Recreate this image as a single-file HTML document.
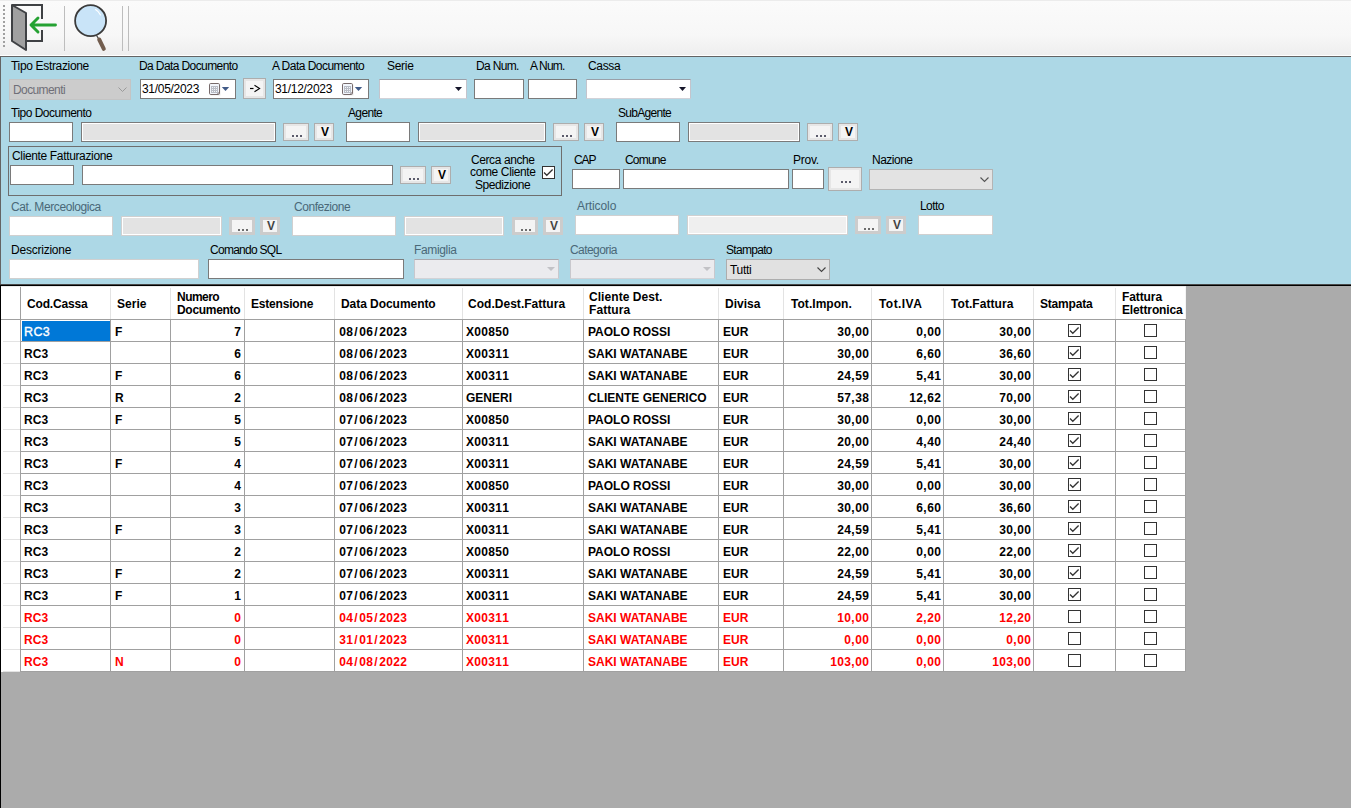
<!DOCTYPE html>
<html><head><meta charset="utf-8"><style>
*{box-sizing:border-box;margin:0;padding:0}
html,body{width:1351px;height:808px;overflow:hidden;background:#ababab;font-family:"Liberation Sans",sans-serif;position:relative}
.a{position:absolute}
.l{position:absolute;font-size:12px;color:#000;white-space:nowrap;line-height:14px}
.ld{color:#4a6878}
.tb{position:absolute;background:#fff;border:1px solid #7a7a7a}
.tbd{position:absolute;background:#fff;border:1px solid #d0d0d0}
.ro{position:absolute;background:#e3e3e3;border:1px solid #7a7a7a;box-shadow:inset 0 0 0 1px #fff}
.rod{position:absolute;background:#e3e3e3;border:1px solid #d0d0d0;box-shadow:inset 0 0 0 1px #fff}
.bt{position:absolute;background:#f4f4f4;border:1px solid #adadad;box-shadow:inset 0 0 0 2px #e6e6e6}
.btd{position:absolute;background:#f4f4f4;border:3px solid #cccccc}
.dt{position:absolute;width:2px;height:2px;background:#111;opacity:.7}
.vt{position:absolute;font-size:12px;font-weight:bold;line-height:12px;color:#000}
.cb{position:absolute;background:#fff;border:1px solid #7a7a7a}
.g{position:absolute;background:#a0a0a0}
.c{position:absolute;font-size:12px;font-weight:bold;line-height:14px;white-space:nowrap;color:#000}
.h{position:absolute;font-size:12px;font-weight:bold;line-height:14px;white-space:nowrap;color:#000}
.red{color:#ff0000}
.c i{font-style:normal;display:inline-block;text-align:center}
.c .d{width:7px}.c .s{width:6px}.c .m{width:4px}
</style></head><body>
<div class="a" style="left:0;top:0;width:1351px;height:55px;background:linear-gradient(#fbfbfb 0%,#f7f7f7 65%,#eeeeee 100%)"></div>
<div class="a" style="left:0;top:55px;width:1351px;height:1px;background:#fff"></div>
<div class="a" style="left:0;top:0;width:1351px;height:1px;background:#ececec"></div>
<div class="a" style="left:0;top:56px;width:1351px;height:1px;background:#646464"></div>
<div class="a" style="left:3px;top:5px;width:2px;height:2px;background:#a0a0a0"></div>
<div class="a" style="left:3px;top:9px;width:2px;height:2px;background:#a0a0a0"></div>
<div class="a" style="left:3px;top:13px;width:2px;height:2px;background:#a0a0a0"></div>
<div class="a" style="left:3px;top:17px;width:2px;height:2px;background:#a0a0a0"></div>
<div class="a" style="left:3px;top:21px;width:2px;height:2px;background:#a0a0a0"></div>
<div class="a" style="left:3px;top:25px;width:2px;height:2px;background:#a0a0a0"></div>
<div class="a" style="left:3px;top:29px;width:2px;height:2px;background:#a0a0a0"></div>
<div class="a" style="left:3px;top:33px;width:2px;height:2px;background:#a0a0a0"></div>
<div class="a" style="left:3px;top:37px;width:2px;height:2px;background:#a0a0a0"></div>
<div class="a" style="left:3px;top:41px;width:2px;height:2px;background:#a0a0a0"></div>
<div class="a" style="left:3px;top:45px;width:2px;height:2px;background:#a0a0a0"></div>
<div class="a" style="left:64px;top:6px;width:1px;height:45px;background:#bdbdbd"></div>
<div class="a" style="left:122px;top:6px;width:1px;height:45px;background:#bdbdbd"></div>
<div class="a" style="left:128px;top:6px;width:1px;height:45px;background:#bdbdbd"></div>
<svg class="a" style="left:0;top:0" width="140" height="56" viewBox="0 0 140 56">
<path d="M12 5 H42 V19 M42 30 V41 H26" fill="none" stroke="#3f4144" stroke-width="2"/>
<path d="M12 5 L26 13 V50 L12 41 Z" fill="#a0a0a0" stroke="#3f4144" stroke-width="2" stroke-linejoin="round"/>
<path d="M55.5 25 H31 M38 18 L31 25 L38 32" fill="none" stroke="#25a233" stroke-width="2.9" stroke-linecap="round" stroke-linejoin="round"/>
<circle cx="90.6" cy="20.7" r="15.5" fill="#c9e4f8" stroke="#3b3b3b" stroke-width="1.8"/>
<path d="M95.5 9.5 Q99 11.5 100.5 15" fill="none" stroke="#fff" stroke-width="1.1" stroke-linecap="round"/>
<path d="M96.5 35.5 L98.5 38.5" stroke="#3b3b3b" stroke-width="1.2"/><path d="M99.2 39.5 L103.8 48.8" fill="none" stroke="#725d4e" stroke-width="4" stroke-linecap="round"/>
</svg>
<div class="a" style="left:0;top:57px;width:1351px;height:227px;background:#add8e6"></div>
<div class="a" style="left:0;top:57px;width:1px;height:227px;background:#646464"></div>
<div class="l" style="left:11px;top:59px;letter-spacing:-0.331px;">Tipo Estrazione</div>
<div class="l" style="left:139px;top:59px;letter-spacing:-0.601px;">Da Data Documento</div>
<div class="l" style="left:272px;top:59px;letter-spacing:-0.532px;">A Data Documento</div>
<div class="l" style="left:387px;top:59px;letter-spacing:-0.303px;">Serie</div>
<div class="l" style="left:476px;top:59px;letter-spacing:-0.657px;">Da Num.</div>
<div class="l" style="left:530px;top:59px;letter-spacing:-0.802px;">A Num.</div>
<div class="l" style="left:588px;top:59px;letter-spacing:-0.328px;">Cassa</div>
<div class="a" style="left:9px;top:79px;width:122px;height:21px;background:#cccccc;border:1px solid #c4c4c4"></div>
<div class="l" style="left:13px;top:83px;color:#6f6f78;font-size:12px;letter-spacing:-0.6px">Documenti</div>
<svg class="a" style="left:118px;top:87px" width="9" height="6"><path d="M0.5 0.5 L4.5 4.5 L8.5 0.5" fill="none" stroke="#9a9a9a" stroke-width="1"/></svg>
<div class="tb" style="left:140px;top:79px;width:96px;height:20px;"></div>
<div class="l" style="left:142px;top:82px;font-size:12px;letter-spacing:-0.3px">31/05/2023</div>
<svg class="a" style="left:209px;top:83px" width="22" height="14" viewBox="0 0 22 14">
<rect x="1.5" y="1.5" width="10" height="11" fill="#000" opacity="0.08"/>
<rect x="0.5" y="0.5" width="10" height="11" rx="1.2" fill="#f2f6fc" stroke="#776a6a" stroke-width="1"/>
<rect x="2" y="3" width="7" height="7" fill="#b9bdc6"/>
<rect x="3" y="4" width="1" height="1" fill="#f4f6fa"/><rect x="3" y="6" width="1" height="1" fill="#f4f6fa"/><rect x="3" y="8" width="1" height="1" fill="#f4f6fa"/><rect x="5" y="4" width="1" height="1" fill="#f4f6fa"/><rect x="5" y="6" width="1" height="1" fill="#f4f6fa"/><rect x="5" y="8" width="1" height="1" fill="#f4f6fa"/><rect x="7" y="4" width="1" height="1" fill="#f4f6fa"/><rect x="7" y="6" width="1" height="1" fill="#f4f6fa"/><rect x="7" y="8" width="1" height="1" fill="#f4f6fa"/>
<path d="M8 11.5 L10.5 9" stroke="#776a6a" stroke-width="1"/>
<path d="M12.8 4 H20.2 L16.5 8 Z" fill="#415b88"/>
</svg>
<div class="bt" style="left:243px;top:78px;width:23px;height:21px;"></div>
<svg class="a" style="left:243px;top:78px" width="23" height="21"><path d="M7 10.5 H10.5" stroke="#000" stroke-width="1.2"/><path d="M11.5 7.3 L16.6 10.5 L11.5 13.7" fill="none" stroke="#000" stroke-width="1.1"/></svg>
<div class="tb" style="left:273px;top:79px;width:96px;height:20px;"></div>
<div class="l" style="left:275px;top:82px;font-size:12px;letter-spacing:-0.3px">31/12/2023</div>
<svg class="a" style="left:342px;top:83px" width="22" height="14" viewBox="0 0 22 14">
<rect x="1.5" y="1.5" width="10" height="11" fill="#000" opacity="0.08"/>
<rect x="0.5" y="0.5" width="10" height="11" rx="1.2" fill="#f2f6fc" stroke="#776a6a" stroke-width="1"/>
<rect x="2" y="3" width="7" height="7" fill="#b9bdc6"/>
<rect x="3" y="4" width="1" height="1" fill="#f4f6fa"/><rect x="3" y="6" width="1" height="1" fill="#f4f6fa"/><rect x="3" y="8" width="1" height="1" fill="#f4f6fa"/><rect x="5" y="4" width="1" height="1" fill="#f4f6fa"/><rect x="5" y="6" width="1" height="1" fill="#f4f6fa"/><rect x="5" y="8" width="1" height="1" fill="#f4f6fa"/><rect x="7" y="4" width="1" height="1" fill="#f4f6fa"/><rect x="7" y="6" width="1" height="1" fill="#f4f6fa"/><rect x="7" y="8" width="1" height="1" fill="#f4f6fa"/>
<path d="M8 11.5 L10.5 9" stroke="#776a6a" stroke-width="1"/>
<path d="M12.8 4 H20.2 L16.5 8 Z" fill="#415b88"/>
</svg>
<div class="tb" style="left:379px;top:79px;width:88px;height:20px;border-color:#9a9fa8 #c4c4cc #d2d2d8 #c4c4cc"></div>
<svg class="a" style="left:455px;top:87px" width="7" height="5"><path d="M0 0 H7 L3.5 4Z" fill="#15152a"/></svg>
<div class="tb" style="left:474px;top:79px;width:50px;height:20px;"></div>
<div class="tb" style="left:528px;top:79px;width:49px;height:20px;"></div>
<div class="tb" style="left:586px;top:79px;width:105px;height:20px;border-color:#9a9fa8 #c4c4cc #d2d2d8 #c4c4cc"></div>
<svg class="a" style="left:679px;top:87px" width="7" height="5"><path d="M0 0 H7 L3.5 4Z" fill="#15152a"/></svg>
<div class="l" style="left:11px;top:106px;letter-spacing:-0.508px;">Tipo Documento</div>
<div class="l" style="left:348px;top:106px;letter-spacing:-0.647px;">Agente</div>
<div class="l" style="left:618px;top:106px;letter-spacing:-0.711px;">SubAgente</div>
<div class="tb" style="left:9px;top:122px;width:64px;height:20px;"></div>
<div class="ro" style="left:81px;top:122px;width:195px;height:20px;"></div>
<div class="bt" style="left:283px;top:123px;width:26px;height:18px;"></div>
<div class="dt" style="left:292px;top:135px;background:#1a1a30"></div>
<div class="dt" style="left:296px;top:135px;background:#1a1a30"></div>
<div class="dt" style="left:300px;top:135px;background:#1a1a30"></div>
<div class="bt" style="left:314px;top:123px;width:20px;height:18px;"></div>
<div class="vt" style="left:315px;width:20px;text-align:center;top:126px;color:#000">V</div>
<div class="tb" style="left:346px;top:122px;width:64px;height:20px;"></div>
<div class="ro" style="left:418px;top:122px;width:128px;height:20px;"></div>
<div class="bt" style="left:553px;top:123px;width:26px;height:18px;"></div>
<div class="dt" style="left:562px;top:135px;background:#1a1a30"></div>
<div class="dt" style="left:566px;top:135px;background:#1a1a30"></div>
<div class="dt" style="left:570px;top:135px;background:#1a1a30"></div>
<div class="bt" style="left:584px;top:123px;width:20px;height:18px;"></div>
<div class="vt" style="left:585px;width:20px;text-align:center;top:126px;color:#000">V</div>
<div class="tb" style="left:616px;top:122px;width:64px;height:20px;"></div>
<div class="ro" style="left:688px;top:122px;width:112px;height:20px;"></div>
<div class="bt" style="left:807px;top:123px;width:26px;height:18px;"></div>
<div class="dt" style="left:816px;top:135px;background:#1a1a30"></div>
<div class="dt" style="left:820px;top:135px;background:#1a1a30"></div>
<div class="dt" style="left:824px;top:135px;background:#1a1a30"></div>
<div class="bt" style="left:838px;top:123px;width:20px;height:18px;"></div>
<div class="vt" style="left:839px;width:20px;text-align:center;top:126px;color:#000">V</div>
<div class="a" style="left:8px;top:146px;width:554px;height:50px;border:1px solid #6e6e6e"></div>
<div class="l" style="left:12px;top:149px;letter-spacing:-0.352px;">Cliente Fatturazione</div>
<div class="tb" style="left:10px;top:165px;width:64px;height:20px;"></div>
<div class="tb" style="left:82px;top:165px;width:311px;height:20px;"></div>
<div class="bt" style="left:400px;top:166px;width:26px;height:18px;"></div>
<div class="dt" style="left:409px;top:178px;background:#1a1a30"></div>
<div class="dt" style="left:413px;top:178px;background:#1a1a30"></div>
<div class="dt" style="left:417px;top:178px;background:#1a1a30"></div>
<div class="bt" style="left:431px;top:166px;width:20px;height:18px;"></div>
<div class="vt" style="left:432px;width:20px;text-align:center;top:169px;color:#000">V</div>
<div class="l" style="left:471px;top:152.5px;letter-spacing:-0.404px;">Cerca anche</div>
<div class="l" style="left:470px;top:165.2px;letter-spacing:-0.366px;">come Cliente</div>
<div class="l" style="left:475px;top:177.9px;letter-spacing:-0.420px;">Spedizione</div>
<div class="cb" style="left:542px;top:166px;width:13px;height:13px;border-color:#333"></div>
<svg class="a" style="left:542px;top:166px" width="13" height="13"><path d="M2 6.5 L4.8 9.3 L10.6 3.5" fill="none" stroke="#333" stroke-width="1.3"/></svg>
<div class="l" style="left:574px;top:153px;letter-spacing:-1.087px;">CAP</div>
<div class="l" style="left:625px;top:153px;letter-spacing:-0.811px;">Comune</div>
<div class="l" style="left:793px;top:153px;letter-spacing:-0.229px;">Prov.</div>
<div class="l" style="left:872px;top:153px;letter-spacing:-0.505px;">Nazione</div>
<div class="tb" style="left:572px;top:169px;width:48px;height:20px;"></div>
<div class="tb" style="left:623px;top:169px;width:166px;height:20px;"></div>
<div class="tb" style="left:792px;top:169px;width:32px;height:20px;"></div>
<div class="bt" style="left:828px;top:167px;width:34px;height:24px;"></div>
<div class="dt" style="left:841px;top:181px;background:#1a1a30"></div>
<div class="dt" style="left:845px;top:181px;background:#1a1a30"></div>
<div class="dt" style="left:849px;top:181px;background:#1a1a30"></div>
<div class="a" style="left:869px;top:169px;width:124px;height:21px;background:#e3e3e3;border:1px solid #b4b4b4"></div>
<svg class="a" style="left:980px;top:177px" width="9" height="6"><path d="M0.5 0.5 L4.5 4.5 L8.5 0.5" fill="none" stroke="#555" stroke-width="1.1"/></svg>
<div class="l ld" style="left:11px;top:200px;letter-spacing:-0.401px;">Cat. Merceologica</div>
<div class="l ld" style="left:294px;top:200px;letter-spacing:-0.457px;">Confezione</div>
<div class="l ld" style="left:577px;top:199px;letter-spacing:-0.102px;">Articolo</div>
<div class="l" style="left:920px;top:199px;letter-spacing:-0.597px;">Lotto</div>
<div class="tbd" style="left:9px;top:216px;width:104px;height:20px;"></div>
<div class="rod" style="left:121px;top:216px;width:101px;height:20px;"></div>
<div class="btd" style="left:229px;top:217px;width:26px;height:18px;"></div>
<div class="dt" style="left:238px;top:229px;background:#333"></div>
<div class="dt" style="left:242px;top:229px;background:#333"></div>
<div class="dt" style="left:246px;top:229px;background:#333"></div>
<div class="btd" style="left:260px;top:217px;width:20px;height:18px;"></div>
<div class="vt" style="left:261px;width:20px;text-align:center;top:220px;color:#444">V</div>
<div class="tbd" style="left:292px;top:216px;width:104px;height:20px;"></div>
<div class="rod" style="left:404px;top:216px;width:100px;height:20px;"></div>
<div class="btd" style="left:512px;top:217px;width:26px;height:18px;"></div>
<div class="dt" style="left:521px;top:229px;background:#333"></div>
<div class="dt" style="left:525px;top:229px;background:#333"></div>
<div class="dt" style="left:529px;top:229px;background:#333"></div>
<div class="btd" style="left:543px;top:217px;width:20px;height:18px;"></div>
<div class="vt" style="left:544px;width:20px;text-align:center;top:220px;color:#444">V</div>
<div class="tbd" style="left:575px;top:215px;width:104px;height:20px;"></div>
<div class="a" style="left:687px;top:215px;width:161px;height:20px;background:#efefef;border:1px solid #d0d0d0;box-shadow:inset 0 0 0 1px #fff"></div>
<div class="btd" style="left:855px;top:216px;width:26px;height:18px;"></div>
<div class="dt" style="left:864px;top:228px;background:#333"></div>
<div class="dt" style="left:868px;top:228px;background:#333"></div>
<div class="dt" style="left:872px;top:228px;background:#333"></div>
<div class="btd" style="left:886px;top:216px;width:20px;height:18px;"></div>
<div class="vt" style="left:887px;width:20px;text-align:center;top:219px;color:#444">V</div>
<div class="tbd" style="left:918px;top:215px;width:75px;height:20px;"></div>
<div class="l" style="left:11px;top:243px;letter-spacing:-0.229px;">Descrizione</div>
<div class="l" style="left:210px;top:243px;letter-spacing:-0.728px;">Comando SQL</div>
<div class="l ld" style="left:414px;top:243px;letter-spacing:-0.349px;">Famiglia</div>
<div class="l ld" style="left:570px;top:243px;letter-spacing:-0.566px;">Categoria</div>
<div class="l" style="left:726px;top:243px;letter-spacing:-0.695px;">Stampato</div>
<div class="tbd" style="left:9px;top:259px;width:190px;height:20px;"></div>
<div class="tb" style="left:208px;top:259px;width:196px;height:20px;"></div>
<div class="a" style="left:414px;top:259px;width:145px;height:20px;background:#ebebee;border:1px solid;border-color:#a8a8ae #c8c8cd #d2d2d6 #c8c8cd"></div>
<svg class="a" style="left:547px;top:267px" width="8" height="5"><path d="M0 0 H8 L4 4Z" fill="#c2c2c6"/></svg>
<div class="a" style="left:570px;top:259px;width:145px;height:20px;background:#ebebee;border:1px solid;border-color:#a8a8ae #c8c8cd #d2d2d6 #c8c8cd"></div>
<svg class="a" style="left:703px;top:267px" width="8" height="5"><path d="M0 0 H8 L4 4Z" fill="#c2c2c6"/></svg>
<div class="a" style="left:726px;top:259px;width:104px;height:21px;background:#e1e1e1;border:1px solid #adadad"></div>
<div class="l" style="left:730px;top:263px;font-size:12px;letter-spacing:-0.3px">Tutti</div>
<svg class="a" style="left:817px;top:267px" width="9" height="6"><path d="M0.5 0.5 L4.5 4.5 L8.5 0.5" fill="none" stroke="#444" stroke-width="1.1"/></svg>
<div class="a" style="left:0;top:284px;width:1351px;height:1px;background:#4a4a4a"></div>
<div class="a" style="left:0;top:285px;width:1351px;height:1px;background:#000"></div>
<div class="a" style="left:0;top:286px;width:1px;height:522px;background:#000"></div>
<div class="a" style="left:1px;top:286px;width:1184px;height:386px;background:#fff"></div>
<div class="g" style="left:110px;top:288px;width:1px;height:31px;background:#e3e3e3"></div>
<div class="g" style="left:170px;top:288px;width:1px;height:31px;background:#e3e3e3"></div>
<div class="g" style="left:244px;top:288px;width:1px;height:31px;background:#e3e3e3"></div>
<div class="g" style="left:334px;top:288px;width:1px;height:31px;background:#e3e3e3"></div>
<div class="g" style="left:462px;top:288px;width:1px;height:31px;background:#e3e3e3"></div>
<div class="g" style="left:583px;top:288px;width:1px;height:31px;background:#e3e3e3"></div>
<div class="g" style="left:718px;top:288px;width:1px;height:31px;background:#e3e3e3"></div>
<div class="g" style="left:783px;top:288px;width:1px;height:31px;background:#e3e3e3"></div>
<div class="g" style="left:871px;top:288px;width:1px;height:31px;background:#e3e3e3"></div>
<div class="g" style="left:943px;top:288px;width:1px;height:31px;background:#e3e3e3"></div>
<div class="g" style="left:1033px;top:288px;width:1px;height:31px;background:#e3e3e3"></div>
<div class="g" style="left:1115px;top:288px;width:1px;height:31px;background:#e3e3e3"></div>
<div class="g" style="left:20px;top:286px;width:1px;height:33px"></div>
<div class="a" style="left:1185px;top:286px;width:1px;height:33px;background:#f4f4f4"></div>
<div class="a" style="left:1px;top:286px;width:1185px;height:1px;background:#ececec"></div>
<div class="g" style="left:1px;top:319px;width:1184px;height:1px"></div>
<div class="g" style="left:21px;top:341px;width:1164px;height:1px"></div>
<div class="g" style="left:3px;top:341px;width:17px;height:1px;background:#e3e3e3"></div>
<div class="g" style="left:21px;top:363px;width:1164px;height:1px"></div>
<div class="g" style="left:3px;top:363px;width:17px;height:1px;background:#e3e3e3"></div>
<div class="g" style="left:21px;top:385px;width:1164px;height:1px"></div>
<div class="g" style="left:3px;top:385px;width:17px;height:1px;background:#e3e3e3"></div>
<div class="g" style="left:21px;top:407px;width:1164px;height:1px"></div>
<div class="g" style="left:3px;top:407px;width:17px;height:1px;background:#e3e3e3"></div>
<div class="g" style="left:21px;top:429px;width:1164px;height:1px"></div>
<div class="g" style="left:3px;top:429px;width:17px;height:1px;background:#e3e3e3"></div>
<div class="g" style="left:21px;top:451px;width:1164px;height:1px"></div>
<div class="g" style="left:3px;top:451px;width:17px;height:1px;background:#e3e3e3"></div>
<div class="g" style="left:21px;top:473px;width:1164px;height:1px"></div>
<div class="g" style="left:3px;top:473px;width:17px;height:1px;background:#e3e3e3"></div>
<div class="g" style="left:21px;top:495px;width:1164px;height:1px"></div>
<div class="g" style="left:3px;top:495px;width:17px;height:1px;background:#e3e3e3"></div>
<div class="g" style="left:21px;top:517px;width:1164px;height:1px"></div>
<div class="g" style="left:3px;top:517px;width:17px;height:1px;background:#e3e3e3"></div>
<div class="g" style="left:21px;top:539px;width:1164px;height:1px"></div>
<div class="g" style="left:3px;top:539px;width:17px;height:1px;background:#e3e3e3"></div>
<div class="g" style="left:21px;top:561px;width:1164px;height:1px"></div>
<div class="g" style="left:3px;top:561px;width:17px;height:1px;background:#e3e3e3"></div>
<div class="g" style="left:21px;top:583px;width:1164px;height:1px"></div>
<div class="g" style="left:3px;top:583px;width:17px;height:1px;background:#e3e3e3"></div>
<div class="g" style="left:21px;top:605px;width:1164px;height:1px"></div>
<div class="g" style="left:3px;top:605px;width:17px;height:1px;background:#e3e3e3"></div>
<div class="g" style="left:21px;top:627px;width:1164px;height:1px"></div>
<div class="g" style="left:3px;top:627px;width:17px;height:1px;background:#e3e3e3"></div>
<div class="g" style="left:21px;top:649px;width:1164px;height:1px"></div>
<div class="g" style="left:3px;top:649px;width:17px;height:1px;background:#e3e3e3"></div>
<div class="g" style="left:21px;top:671px;width:1164px;height:1px"></div>
<div class="g" style="left:3px;top:671px;width:17px;height:1px;background:#e3e3e3"></div>
<div class="g" style="left:20px;top:319px;width:1px;height:353px"></div>
<div class="g" style="left:110px;top:319px;width:1px;height:353px"></div>
<div class="g" style="left:170px;top:319px;width:1px;height:353px"></div>
<div class="g" style="left:244px;top:319px;width:1px;height:353px"></div>
<div class="g" style="left:334px;top:319px;width:1px;height:353px"></div>
<div class="g" style="left:462px;top:319px;width:1px;height:353px"></div>
<div class="g" style="left:583px;top:319px;width:1px;height:353px"></div>
<div class="g" style="left:718px;top:319px;width:1px;height:353px"></div>
<div class="g" style="left:783px;top:319px;width:1px;height:353px"></div>
<div class="g" style="left:871px;top:319px;width:1px;height:353px"></div>
<div class="g" style="left:943px;top:319px;width:1px;height:353px"></div>
<div class="g" style="left:1033px;top:319px;width:1px;height:353px"></div>
<div class="g" style="left:1115px;top:319px;width:1px;height:353px"></div>
<div class="g" style="left:1185px;top:319px;width:1px;height:353px"></div>
<div class="h" style="left:27px;top:297px;letter-spacing:-0.153px">Cod.Cassa</div>
<div class="h" style="left:117px;top:297px;letter-spacing:0.036px">Serie</div>
<div class="h" style="left:177px;top:290px;letter-spacing:-0.528px">Numero</div>
<div class="h" style="left:177px;top:303px;letter-spacing:-0.300px">Documento</div>
<div class="h" style="left:251px;top:297px;letter-spacing:-0.191px">Estensione</div>
<div class="h" style="left:341px;top:297px;letter-spacing:-0.050px">Data Documento</div>
<div class="h" style="left:468px;top:297px;letter-spacing:0.028px">Cod.Dest.Fattura</div>
<div class="h" style="left:589px;top:290px;letter-spacing:0.060px">Cliente Dest.</div>
<div class="h" style="left:589px;top:303px;letter-spacing:0.088px">Fattura</div>
<div class="h" style="left:725px;top:297px;letter-spacing:0.029px">Divisa</div>
<div class="h" style="left:791px;top:297px;letter-spacing:0.041px">Tot.Impon.</div>
<div class="h" style="left:879px;top:297px;letter-spacing:0.431px">Tot.IVA</div>
<div class="h" style="left:951px;top:297px;letter-spacing:0.053px">Tot.Fattura</div>
<div class="h" style="left:1040px;top:297px;letter-spacing:-0.203px">Stampata</div>
<div class="h" style="left:1122px;top:290px;letter-spacing:-0.095px">Fattura</div>
<div class="h" style="left:1122px;top:303px;letter-spacing:-0.132px">Elettronica</div>
<div class="a" style="left:22px;top:321px;width:88px;height:20px;background:#0078d7"></div>
<div class="c" style="left:24px;top:325px;color:#fff;font-weight:normal;font-size:12.5px;letter-spacing:0.4px;-webkit-text-stroke:0.35px #fff">RC3</div>
<div class="c" style="left:115px;top:325px;">F</div>
<div class="c" style="right:1110px;top:325px"><i class="d">7</i></div>
<div class="c" style="left:339px;top:325px;"><i class="d">0</i><i class="d">8</i><i class="s">/</i><i class="d">0</i><i class="d">6</i><i class="s">/</i><i class="d">2</i><i class="d">0</i><i class="d">2</i><i class="d">3</i></div>
<div class="c" style="left:466px;top:325px;">X<i class="d">0</i><i class="d">0</i><i class="d">8</i><i class="d">5</i><i class="d">0</i></div>
<div class="c" style="left:588px;top:325px;">PAOLO ROSSI</div>
<div class="c" style="left:723px;top:325px;">EUR</div>
<div class="c" style="right:482px;top:325px"><i class="d">3</i><i class="d">0</i><i class="m">,</i><i class="d">0</i><i class="d">0</i></div>
<div class="c" style="right:410px;top:325px"><i class="d">0</i><i class="m">,</i><i class="d">0</i><i class="d">0</i></div>
<div class="c" style="right:320px;top:325px"><i class="d">3</i><i class="d">0</i><i class="m">,</i><i class="d">0</i><i class="d">0</i></div>
<div class="cb" style="left:1068px;top:324px;width:13px;height:13px;border-color:#333"></div>
<svg class="a" style="left:1068px;top:324px" width="13" height="13"><path d="M2 6.5 L4.8 9.3 L10.6 3.5" fill="none" stroke="#333" stroke-width="1.3"/></svg>
<div class="cb" style="left:1144px;top:324px;width:13px;height:13px;border-color:#333"></div>
<div class="c" style="left:24px;top:347px;">RC<i class="d">3</i></div>
<div class="c" style="left:115px;top:347px;"></div>
<div class="c" style="right:1110px;top:347px"><i class="d">6</i></div>
<div class="c" style="left:339px;top:347px;"><i class="d">0</i><i class="d">8</i><i class="s">/</i><i class="d">0</i><i class="d">6</i><i class="s">/</i><i class="d">2</i><i class="d">0</i><i class="d">2</i><i class="d">3</i></div>
<div class="c" style="left:466px;top:347px;">X<i class="d">0</i><i class="d">0</i><i class="d">3</i><i class="d">1</i><i class="d">1</i></div>
<div class="c" style="left:588px;top:347px;">SAKI WATANABE</div>
<div class="c" style="left:723px;top:347px;">EUR</div>
<div class="c" style="right:482px;top:347px"><i class="d">3</i><i class="d">0</i><i class="m">,</i><i class="d">0</i><i class="d">0</i></div>
<div class="c" style="right:410px;top:347px"><i class="d">6</i><i class="m">,</i><i class="d">6</i><i class="d">0</i></div>
<div class="c" style="right:320px;top:347px"><i class="d">3</i><i class="d">6</i><i class="m">,</i><i class="d">6</i><i class="d">0</i></div>
<div class="cb" style="left:1068px;top:346px;width:13px;height:13px;border-color:#333"></div>
<svg class="a" style="left:1068px;top:346px" width="13" height="13"><path d="M2 6.5 L4.8 9.3 L10.6 3.5" fill="none" stroke="#333" stroke-width="1.3"/></svg>
<div class="cb" style="left:1144px;top:346px;width:13px;height:13px;border-color:#333"></div>
<div class="c" style="left:24px;top:369px;">RC<i class="d">3</i></div>
<div class="c" style="left:115px;top:369px;">F</div>
<div class="c" style="right:1110px;top:369px"><i class="d">6</i></div>
<div class="c" style="left:339px;top:369px;"><i class="d">0</i><i class="d">8</i><i class="s">/</i><i class="d">0</i><i class="d">6</i><i class="s">/</i><i class="d">2</i><i class="d">0</i><i class="d">2</i><i class="d">3</i></div>
<div class="c" style="left:466px;top:369px;">X<i class="d">0</i><i class="d">0</i><i class="d">3</i><i class="d">1</i><i class="d">1</i></div>
<div class="c" style="left:588px;top:369px;">SAKI WATANABE</div>
<div class="c" style="left:723px;top:369px;">EUR</div>
<div class="c" style="right:482px;top:369px"><i class="d">2</i><i class="d">4</i><i class="m">,</i><i class="d">5</i><i class="d">9</i></div>
<div class="c" style="right:410px;top:369px"><i class="d">5</i><i class="m">,</i><i class="d">4</i><i class="d">1</i></div>
<div class="c" style="right:320px;top:369px"><i class="d">3</i><i class="d">0</i><i class="m">,</i><i class="d">0</i><i class="d">0</i></div>
<div class="cb" style="left:1068px;top:368px;width:13px;height:13px;border-color:#333"></div>
<svg class="a" style="left:1068px;top:368px" width="13" height="13"><path d="M2 6.5 L4.8 9.3 L10.6 3.5" fill="none" stroke="#333" stroke-width="1.3"/></svg>
<div class="cb" style="left:1144px;top:368px;width:13px;height:13px;border-color:#333"></div>
<div class="c" style="left:24px;top:391px;">RC<i class="d">3</i></div>
<div class="c" style="left:115px;top:391px;">R</div>
<div class="c" style="right:1110px;top:391px"><i class="d">2</i></div>
<div class="c" style="left:339px;top:391px;"><i class="d">0</i><i class="d">8</i><i class="s">/</i><i class="d">0</i><i class="d">6</i><i class="s">/</i><i class="d">2</i><i class="d">0</i><i class="d">2</i><i class="d">3</i></div>
<div class="c" style="left:466px;top:391px;">GENERI</div>
<div class="c" style="left:588px;top:391px;">CLIENTE GENERICO</div>
<div class="c" style="left:723px;top:391px;">EUR</div>
<div class="c" style="right:482px;top:391px"><i class="d">5</i><i class="d">7</i><i class="m">,</i><i class="d">3</i><i class="d">8</i></div>
<div class="c" style="right:410px;top:391px"><i class="d">1</i><i class="d">2</i><i class="m">,</i><i class="d">6</i><i class="d">2</i></div>
<div class="c" style="right:320px;top:391px"><i class="d">7</i><i class="d">0</i><i class="m">,</i><i class="d">0</i><i class="d">0</i></div>
<div class="cb" style="left:1068px;top:390px;width:13px;height:13px;border-color:#333"></div>
<svg class="a" style="left:1068px;top:390px" width="13" height="13"><path d="M2 6.5 L4.8 9.3 L10.6 3.5" fill="none" stroke="#333" stroke-width="1.3"/></svg>
<div class="cb" style="left:1144px;top:390px;width:13px;height:13px;border-color:#333"></div>
<div class="c" style="left:24px;top:413px;">RC<i class="d">3</i></div>
<div class="c" style="left:115px;top:413px;">F</div>
<div class="c" style="right:1110px;top:413px"><i class="d">5</i></div>
<div class="c" style="left:339px;top:413px;"><i class="d">0</i><i class="d">7</i><i class="s">/</i><i class="d">0</i><i class="d">6</i><i class="s">/</i><i class="d">2</i><i class="d">0</i><i class="d">2</i><i class="d">3</i></div>
<div class="c" style="left:466px;top:413px;">X<i class="d">0</i><i class="d">0</i><i class="d">8</i><i class="d">5</i><i class="d">0</i></div>
<div class="c" style="left:588px;top:413px;">PAOLO ROSSI</div>
<div class="c" style="left:723px;top:413px;">EUR</div>
<div class="c" style="right:482px;top:413px"><i class="d">3</i><i class="d">0</i><i class="m">,</i><i class="d">0</i><i class="d">0</i></div>
<div class="c" style="right:410px;top:413px"><i class="d">0</i><i class="m">,</i><i class="d">0</i><i class="d">0</i></div>
<div class="c" style="right:320px;top:413px"><i class="d">3</i><i class="d">0</i><i class="m">,</i><i class="d">0</i><i class="d">0</i></div>
<div class="cb" style="left:1068px;top:412px;width:13px;height:13px;border-color:#333"></div>
<svg class="a" style="left:1068px;top:412px" width="13" height="13"><path d="M2 6.5 L4.8 9.3 L10.6 3.5" fill="none" stroke="#333" stroke-width="1.3"/></svg>
<div class="cb" style="left:1144px;top:412px;width:13px;height:13px;border-color:#333"></div>
<div class="c" style="left:24px;top:435px;">RC<i class="d">3</i></div>
<div class="c" style="left:115px;top:435px;"></div>
<div class="c" style="right:1110px;top:435px"><i class="d">5</i></div>
<div class="c" style="left:339px;top:435px;"><i class="d">0</i><i class="d">7</i><i class="s">/</i><i class="d">0</i><i class="d">6</i><i class="s">/</i><i class="d">2</i><i class="d">0</i><i class="d">2</i><i class="d">3</i></div>
<div class="c" style="left:466px;top:435px;">X<i class="d">0</i><i class="d">0</i><i class="d">3</i><i class="d">1</i><i class="d">1</i></div>
<div class="c" style="left:588px;top:435px;">SAKI WATANABE</div>
<div class="c" style="left:723px;top:435px;">EUR</div>
<div class="c" style="right:482px;top:435px"><i class="d">2</i><i class="d">0</i><i class="m">,</i><i class="d">0</i><i class="d">0</i></div>
<div class="c" style="right:410px;top:435px"><i class="d">4</i><i class="m">,</i><i class="d">4</i><i class="d">0</i></div>
<div class="c" style="right:320px;top:435px"><i class="d">2</i><i class="d">4</i><i class="m">,</i><i class="d">4</i><i class="d">0</i></div>
<div class="cb" style="left:1068px;top:434px;width:13px;height:13px;border-color:#333"></div>
<svg class="a" style="left:1068px;top:434px" width="13" height="13"><path d="M2 6.5 L4.8 9.3 L10.6 3.5" fill="none" stroke="#333" stroke-width="1.3"/></svg>
<div class="cb" style="left:1144px;top:434px;width:13px;height:13px;border-color:#333"></div>
<div class="c" style="left:24px;top:457px;">RC<i class="d">3</i></div>
<div class="c" style="left:115px;top:457px;">F</div>
<div class="c" style="right:1110px;top:457px"><i class="d">4</i></div>
<div class="c" style="left:339px;top:457px;"><i class="d">0</i><i class="d">7</i><i class="s">/</i><i class="d">0</i><i class="d">6</i><i class="s">/</i><i class="d">2</i><i class="d">0</i><i class="d">2</i><i class="d">3</i></div>
<div class="c" style="left:466px;top:457px;">X<i class="d">0</i><i class="d">0</i><i class="d">3</i><i class="d">1</i><i class="d">1</i></div>
<div class="c" style="left:588px;top:457px;">SAKI WATANABE</div>
<div class="c" style="left:723px;top:457px;">EUR</div>
<div class="c" style="right:482px;top:457px"><i class="d">2</i><i class="d">4</i><i class="m">,</i><i class="d">5</i><i class="d">9</i></div>
<div class="c" style="right:410px;top:457px"><i class="d">5</i><i class="m">,</i><i class="d">4</i><i class="d">1</i></div>
<div class="c" style="right:320px;top:457px"><i class="d">3</i><i class="d">0</i><i class="m">,</i><i class="d">0</i><i class="d">0</i></div>
<div class="cb" style="left:1068px;top:456px;width:13px;height:13px;border-color:#333"></div>
<svg class="a" style="left:1068px;top:456px" width="13" height="13"><path d="M2 6.5 L4.8 9.3 L10.6 3.5" fill="none" stroke="#333" stroke-width="1.3"/></svg>
<div class="cb" style="left:1144px;top:456px;width:13px;height:13px;border-color:#333"></div>
<div class="c" style="left:24px;top:479px;">RC<i class="d">3</i></div>
<div class="c" style="left:115px;top:479px;"></div>
<div class="c" style="right:1110px;top:479px"><i class="d">4</i></div>
<div class="c" style="left:339px;top:479px;"><i class="d">0</i><i class="d">7</i><i class="s">/</i><i class="d">0</i><i class="d">6</i><i class="s">/</i><i class="d">2</i><i class="d">0</i><i class="d">2</i><i class="d">3</i></div>
<div class="c" style="left:466px;top:479px;">X<i class="d">0</i><i class="d">0</i><i class="d">8</i><i class="d">5</i><i class="d">0</i></div>
<div class="c" style="left:588px;top:479px;">PAOLO ROSSI</div>
<div class="c" style="left:723px;top:479px;">EUR</div>
<div class="c" style="right:482px;top:479px"><i class="d">3</i><i class="d">0</i><i class="m">,</i><i class="d">0</i><i class="d">0</i></div>
<div class="c" style="right:410px;top:479px"><i class="d">0</i><i class="m">,</i><i class="d">0</i><i class="d">0</i></div>
<div class="c" style="right:320px;top:479px"><i class="d">3</i><i class="d">0</i><i class="m">,</i><i class="d">0</i><i class="d">0</i></div>
<div class="cb" style="left:1068px;top:478px;width:13px;height:13px;border-color:#333"></div>
<svg class="a" style="left:1068px;top:478px" width="13" height="13"><path d="M2 6.5 L4.8 9.3 L10.6 3.5" fill="none" stroke="#333" stroke-width="1.3"/></svg>
<div class="cb" style="left:1144px;top:478px;width:13px;height:13px;border-color:#333"></div>
<div class="c" style="left:24px;top:501px;">RC<i class="d">3</i></div>
<div class="c" style="left:115px;top:501px;"></div>
<div class="c" style="right:1110px;top:501px"><i class="d">3</i></div>
<div class="c" style="left:339px;top:501px;"><i class="d">0</i><i class="d">7</i><i class="s">/</i><i class="d">0</i><i class="d">6</i><i class="s">/</i><i class="d">2</i><i class="d">0</i><i class="d">2</i><i class="d">3</i></div>
<div class="c" style="left:466px;top:501px;">X<i class="d">0</i><i class="d">0</i><i class="d">3</i><i class="d">1</i><i class="d">1</i></div>
<div class="c" style="left:588px;top:501px;">SAKI WATANABE</div>
<div class="c" style="left:723px;top:501px;">EUR</div>
<div class="c" style="right:482px;top:501px"><i class="d">3</i><i class="d">0</i><i class="m">,</i><i class="d">0</i><i class="d">0</i></div>
<div class="c" style="right:410px;top:501px"><i class="d">6</i><i class="m">,</i><i class="d">6</i><i class="d">0</i></div>
<div class="c" style="right:320px;top:501px"><i class="d">3</i><i class="d">6</i><i class="m">,</i><i class="d">6</i><i class="d">0</i></div>
<div class="cb" style="left:1068px;top:500px;width:13px;height:13px;border-color:#333"></div>
<svg class="a" style="left:1068px;top:500px" width="13" height="13"><path d="M2 6.5 L4.8 9.3 L10.6 3.5" fill="none" stroke="#333" stroke-width="1.3"/></svg>
<div class="cb" style="left:1144px;top:500px;width:13px;height:13px;border-color:#333"></div>
<div class="c" style="left:24px;top:523px;">RC<i class="d">3</i></div>
<div class="c" style="left:115px;top:523px;">F</div>
<div class="c" style="right:1110px;top:523px"><i class="d">3</i></div>
<div class="c" style="left:339px;top:523px;"><i class="d">0</i><i class="d">7</i><i class="s">/</i><i class="d">0</i><i class="d">6</i><i class="s">/</i><i class="d">2</i><i class="d">0</i><i class="d">2</i><i class="d">3</i></div>
<div class="c" style="left:466px;top:523px;">X<i class="d">0</i><i class="d">0</i><i class="d">3</i><i class="d">1</i><i class="d">1</i></div>
<div class="c" style="left:588px;top:523px;">SAKI WATANABE</div>
<div class="c" style="left:723px;top:523px;">EUR</div>
<div class="c" style="right:482px;top:523px"><i class="d">2</i><i class="d">4</i><i class="m">,</i><i class="d">5</i><i class="d">9</i></div>
<div class="c" style="right:410px;top:523px"><i class="d">5</i><i class="m">,</i><i class="d">4</i><i class="d">1</i></div>
<div class="c" style="right:320px;top:523px"><i class="d">3</i><i class="d">0</i><i class="m">,</i><i class="d">0</i><i class="d">0</i></div>
<div class="cb" style="left:1068px;top:522px;width:13px;height:13px;border-color:#333"></div>
<svg class="a" style="left:1068px;top:522px" width="13" height="13"><path d="M2 6.5 L4.8 9.3 L10.6 3.5" fill="none" stroke="#333" stroke-width="1.3"/></svg>
<div class="cb" style="left:1144px;top:522px;width:13px;height:13px;border-color:#333"></div>
<div class="c" style="left:24px;top:545px;">RC<i class="d">3</i></div>
<div class="c" style="left:115px;top:545px;"></div>
<div class="c" style="right:1110px;top:545px"><i class="d">2</i></div>
<div class="c" style="left:339px;top:545px;"><i class="d">0</i><i class="d">7</i><i class="s">/</i><i class="d">0</i><i class="d">6</i><i class="s">/</i><i class="d">2</i><i class="d">0</i><i class="d">2</i><i class="d">3</i></div>
<div class="c" style="left:466px;top:545px;">X<i class="d">0</i><i class="d">0</i><i class="d">8</i><i class="d">5</i><i class="d">0</i></div>
<div class="c" style="left:588px;top:545px;">PAOLO ROSSI</div>
<div class="c" style="left:723px;top:545px;">EUR</div>
<div class="c" style="right:482px;top:545px"><i class="d">2</i><i class="d">2</i><i class="m">,</i><i class="d">0</i><i class="d">0</i></div>
<div class="c" style="right:410px;top:545px"><i class="d">0</i><i class="m">,</i><i class="d">0</i><i class="d">0</i></div>
<div class="c" style="right:320px;top:545px"><i class="d">2</i><i class="d">2</i><i class="m">,</i><i class="d">0</i><i class="d">0</i></div>
<div class="cb" style="left:1068px;top:544px;width:13px;height:13px;border-color:#333"></div>
<svg class="a" style="left:1068px;top:544px" width="13" height="13"><path d="M2 6.5 L4.8 9.3 L10.6 3.5" fill="none" stroke="#333" stroke-width="1.3"/></svg>
<div class="cb" style="left:1144px;top:544px;width:13px;height:13px;border-color:#333"></div>
<div class="c" style="left:24px;top:567px;">RC<i class="d">3</i></div>
<div class="c" style="left:115px;top:567px;">F</div>
<div class="c" style="right:1110px;top:567px"><i class="d">2</i></div>
<div class="c" style="left:339px;top:567px;"><i class="d">0</i><i class="d">7</i><i class="s">/</i><i class="d">0</i><i class="d">6</i><i class="s">/</i><i class="d">2</i><i class="d">0</i><i class="d">2</i><i class="d">3</i></div>
<div class="c" style="left:466px;top:567px;">X<i class="d">0</i><i class="d">0</i><i class="d">3</i><i class="d">1</i><i class="d">1</i></div>
<div class="c" style="left:588px;top:567px;">SAKI WATANABE</div>
<div class="c" style="left:723px;top:567px;">EUR</div>
<div class="c" style="right:482px;top:567px"><i class="d">2</i><i class="d">4</i><i class="m">,</i><i class="d">5</i><i class="d">9</i></div>
<div class="c" style="right:410px;top:567px"><i class="d">5</i><i class="m">,</i><i class="d">4</i><i class="d">1</i></div>
<div class="c" style="right:320px;top:567px"><i class="d">3</i><i class="d">0</i><i class="m">,</i><i class="d">0</i><i class="d">0</i></div>
<div class="cb" style="left:1068px;top:566px;width:13px;height:13px;border-color:#333"></div>
<svg class="a" style="left:1068px;top:566px" width="13" height="13"><path d="M2 6.5 L4.8 9.3 L10.6 3.5" fill="none" stroke="#333" stroke-width="1.3"/></svg>
<div class="cb" style="left:1144px;top:566px;width:13px;height:13px;border-color:#333"></div>
<div class="c" style="left:24px;top:589px;">RC<i class="d">3</i></div>
<div class="c" style="left:115px;top:589px;">F</div>
<div class="c" style="right:1110px;top:589px"><i class="d">1</i></div>
<div class="c" style="left:339px;top:589px;"><i class="d">0</i><i class="d">7</i><i class="s">/</i><i class="d">0</i><i class="d">6</i><i class="s">/</i><i class="d">2</i><i class="d">0</i><i class="d">2</i><i class="d">3</i></div>
<div class="c" style="left:466px;top:589px;">X<i class="d">0</i><i class="d">0</i><i class="d">3</i><i class="d">1</i><i class="d">1</i></div>
<div class="c" style="left:588px;top:589px;">SAKI WATANABE</div>
<div class="c" style="left:723px;top:589px;">EUR</div>
<div class="c" style="right:482px;top:589px"><i class="d">2</i><i class="d">4</i><i class="m">,</i><i class="d">5</i><i class="d">9</i></div>
<div class="c" style="right:410px;top:589px"><i class="d">5</i><i class="m">,</i><i class="d">4</i><i class="d">1</i></div>
<div class="c" style="right:320px;top:589px"><i class="d">3</i><i class="d">0</i><i class="m">,</i><i class="d">0</i><i class="d">0</i></div>
<div class="cb" style="left:1068px;top:588px;width:13px;height:13px;border-color:#333"></div>
<svg class="a" style="left:1068px;top:588px" width="13" height="13"><path d="M2 6.5 L4.8 9.3 L10.6 3.5" fill="none" stroke="#333" stroke-width="1.3"/></svg>
<div class="cb" style="left:1144px;top:588px;width:13px;height:13px;border-color:#333"></div>
<div class="c red" style="left:24px;top:611px;">RC<i class="d">3</i></div>
<div class="c red" style="left:115px;top:611px;"></div>
<div class="c red" style="right:1110px;top:611px"><i class="d">0</i></div>
<div class="c red" style="left:339px;top:611px;"><i class="d">0</i><i class="d">4</i><i class="s">/</i><i class="d">0</i><i class="d">5</i><i class="s">/</i><i class="d">2</i><i class="d">0</i><i class="d">2</i><i class="d">3</i></div>
<div class="c red" style="left:466px;top:611px;">X<i class="d">0</i><i class="d">0</i><i class="d">3</i><i class="d">1</i><i class="d">1</i></div>
<div class="c red" style="left:588px;top:611px;">SAKI WATANABE</div>
<div class="c red" style="left:723px;top:611px;">EUR</div>
<div class="c red" style="right:482px;top:611px"><i class="d">1</i><i class="d">0</i><i class="m">,</i><i class="d">0</i><i class="d">0</i></div>
<div class="c red" style="right:410px;top:611px"><i class="d">2</i><i class="m">,</i><i class="d">2</i><i class="d">0</i></div>
<div class="c red" style="right:320px;top:611px"><i class="d">1</i><i class="d">2</i><i class="m">,</i><i class="d">2</i><i class="d">0</i></div>
<div class="cb" style="left:1068px;top:610px;width:13px;height:13px;border-color:#333"></div>
<div class="cb" style="left:1144px;top:610px;width:13px;height:13px;border-color:#333"></div>
<div class="c red" style="left:24px;top:633px;">RC<i class="d">3</i></div>
<div class="c red" style="left:115px;top:633px;"></div>
<div class="c red" style="right:1110px;top:633px"><i class="d">0</i></div>
<div class="c red" style="left:339px;top:633px;"><i class="d">3</i><i class="d">1</i><i class="s">/</i><i class="d">0</i><i class="d">1</i><i class="s">/</i><i class="d">2</i><i class="d">0</i><i class="d">2</i><i class="d">3</i></div>
<div class="c red" style="left:466px;top:633px;">X<i class="d">0</i><i class="d">0</i><i class="d">3</i><i class="d">1</i><i class="d">1</i></div>
<div class="c red" style="left:588px;top:633px;">SAKI WATANABE</div>
<div class="c red" style="left:723px;top:633px;">EUR</div>
<div class="c red" style="right:482px;top:633px"><i class="d">0</i><i class="m">,</i><i class="d">0</i><i class="d">0</i></div>
<div class="c red" style="right:410px;top:633px"><i class="d">0</i><i class="m">,</i><i class="d">0</i><i class="d">0</i></div>
<div class="c red" style="right:320px;top:633px"><i class="d">0</i><i class="m">,</i><i class="d">0</i><i class="d">0</i></div>
<div class="cb" style="left:1068px;top:632px;width:13px;height:13px;border-color:#333"></div>
<div class="cb" style="left:1144px;top:632px;width:13px;height:13px;border-color:#333"></div>
<div class="c red" style="left:24px;top:655px;">RC<i class="d">3</i></div>
<div class="c red" style="left:115px;top:655px;">N</div>
<div class="c red" style="right:1110px;top:655px"><i class="d">0</i></div>
<div class="c red" style="left:339px;top:655px;"><i class="d">0</i><i class="d">4</i><i class="s">/</i><i class="d">0</i><i class="d">8</i><i class="s">/</i><i class="d">2</i><i class="d">0</i><i class="d">2</i><i class="d">2</i></div>
<div class="c red" style="left:466px;top:655px;">X<i class="d">0</i><i class="d">0</i><i class="d">3</i><i class="d">1</i><i class="d">1</i></div>
<div class="c red" style="left:588px;top:655px;">SAKI WATANABE</div>
<div class="c red" style="left:723px;top:655px;">EUR</div>
<div class="c red" style="right:482px;top:655px"><i class="d">1</i><i class="d">0</i><i class="d">3</i><i class="m">,</i><i class="d">0</i><i class="d">0</i></div>
<div class="c red" style="right:410px;top:655px"><i class="d">0</i><i class="m">,</i><i class="d">0</i><i class="d">0</i></div>
<div class="c red" style="right:320px;top:655px"><i class="d">1</i><i class="d">0</i><i class="d">3</i><i class="m">,</i><i class="d">0</i><i class="d">0</i></div>
<div class="cb" style="left:1068px;top:654px;width:13px;height:13px;border-color:#333"></div>
<div class="cb" style="left:1144px;top:654px;width:13px;height:13px;border-color:#333"></div>
</body></html>
